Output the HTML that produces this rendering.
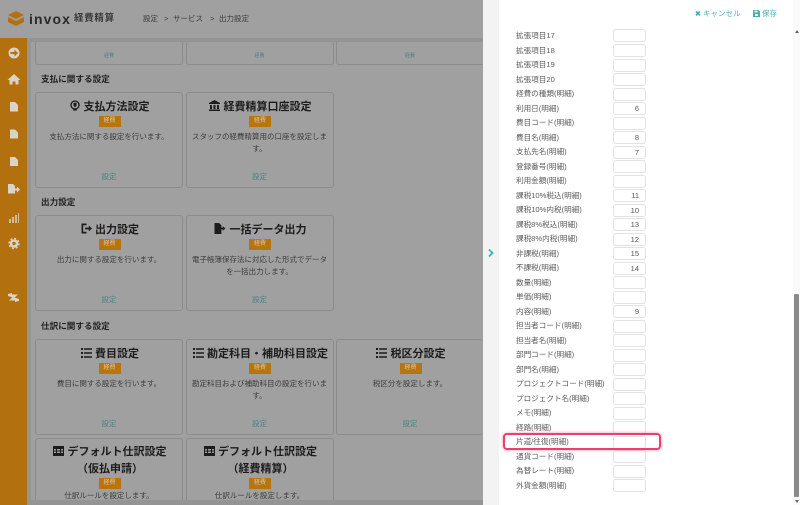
<!DOCTYPE html>
<html lang="ja"><head><meta charset="utf-8"><style>
*{box-sizing:border-box}
html,body{margin:0;padding:0}
html{background:#a0a0a0}
body{width:800px;height:505px;position:relative;overflow:hidden;background:#a0a0a0;font-family:"Liberation Sans","Noto Sans CJK JP",sans-serif;color:#222;filter:blur(.3px)}
.a{position:absolute}
.side{left:0;top:38px;width:27px;height:467px;background:#b2700e}
.bar{left:27px;top:38px;width:456px;height:4px;background:#949494}
.strip{left:27px;top:38px;width:4px;height:467px;background:#949494}
.bot{left:27px;top:500px;width:456px;height:5px;background:#949494}
.card{position:absolute;width:148px;height:96px;border:1px solid #8c8c8c;border-radius:3px;background:#a0a0a0;text-align:center}
.card .t{position:absolute;left:0;right:0;top:6px;padding-left:2px;font-size:11px;font-weight:700;line-height:17px;color:#1c1c1c;white-space:nowrap}
.card .b{position:absolute;left:62.5px;top:23px;width:22px;height:10.500px;background:#b8740f;color:#d8c8a8;font-size:6px;line-height:10.500px}
.card .d{position:absolute;left:2px;right:2px;top:38px;font-size:7.5px;line-height:11.5px;color:#3c3c3c}
.card .l{position:absolute;left:0;right:0;top:78px;font-size:7.5px;line-height:11px;color:#4b8484}
.h{position:absolute;left:41px;font-size:8.6px;font-weight:700;color:#222;line-height:12px;white-space:nowrap}
.drawer{left:483px;top:0;width:317px;height:505px;background:#fff}
.gs{left:483px;top:0;width:16px;height:505px;background:#f3f3f3}
.r{position:absolute;left:516px;font-size:7.6px;line-height:11px;color:#5c5c5c;white-space:nowrap}
.i{position:absolute;left:613px;width:33px;height:13px;border:1px solid #e2e2e2;border-radius:3px;background:#fff;font-size:7.5px;line-height:11px;text-align:right;padding-right:6px;color:#555}
svg{display:block}
</style></head><body>
<svg class="a" style="left:7px;top:11px" width="18" height="16" viewBox="0 0 18 16"><path d="M9 0 17 4 9 8 1 4Z" fill="#b2700e"/><path d="M1 6 9 10 17 6V11L9 15 1 11Z" fill="#b2700e"/></svg>
<div class="a" style="left:29px;top:9px;font-size:14px;font-weight:700;letter-spacing:1.100px;color:#2b2b2b;line-height:20px">invox</div>
<div class="a" style="left:74px;top:12px;font-size:9.5px;font-weight:700;letter-spacing:.7px;color:#3a3a3a;line-height:14px">経費精算</div>
<div class="a" style="left:143px;top:13px;font-size:7.5px;color:#3c3c3c;line-height:12px">設定</div>
<div class="a" style="left:164px;top:13px;font-size:7.5px;color:#3c3c3c;line-height:12px">&gt;</div>
<div class="a" style="left:173px;top:13px;font-size:7.5px;color:#3c3c3c;line-height:12px">サービス</div>
<div class="a" style="left:210px;top:13px;font-size:7.5px;color:#3c3c3c;line-height:12px">&gt;</div>
<div class="a" style="left:219px;top:13px;font-size:7.5px;color:#3c3c3c;line-height:12px">出力設定</div>

<div class="a side"></div><div class="a bar"></div><div class="a strip"></div><div class="a bot"></div>

<svg class="a" style="left:0;top:38px" width="27" height="300" viewBox="0 38 27 300" fill="#d9d3c8">
<circle cx="14" cy="53" r="5.5"/><path d="M10.500 52h4v-2.500l3.500 3.500-3.500 3.500V54h-4z" fill="#b2700e"/>
<path d="M14 74 20.500 80h-2v4.500H15.500V81.500h-3v3H9.500V80h-2z"/>
<path d="M10 102h5l3 3v6.500h-8z"/><path d="M10 129.500h5l3 3v6h-8z"/><path d="M10 157h5l3 3v6h-8z"/>
<path d="M8 184h5l2 2v2.500h2v-2l3 3-3 3v-2h-2v3H8z"/>
<path d="M9 223h2v-4H9zM12 223h2v-6h-2zM15 223h2v-8h-2zM18 223h1v-10h-1z" opacity=".75"/>
<circle cx="14" cy="243.500" r="4.300"/><circle cx="14" cy="243.500" r="5" fill="none" stroke="#d9d3c8" stroke-width="1.400" stroke-dasharray="2 1.930"/><circle cx="14" cy="243.500" r="1.700" fill="#b2700e"/>
<path d="M8 294l4-1v1.500h6L14 298 8 296zM19 301l-4 1v-1.500H9l4-3.500 6 2z"/>
</svg>

<!-- top partial cards -->
<div class="card" style="left:35px;top:42px;height:23px;border-top:0;border-radius:0 0 3px 3px"><div class="l" style="top:9px;font-size:5px">経費</div></div>
<div class="card" style="left:185.500px;top:42px;height:23px;border-top:0;border-radius:0 0 3px 3px"><div class="l" style="top:9px;font-size:5px">経費</div></div>
<div class="card" style="left:336px;top:42px;height:23px;width:147px;border-top:0;border-right:0;border-radius:0 0 0 3px"><div class="l" style="top:9px;font-size:5px">経費</div></div>

<div class="h" style="top:73px">支払に関する設定</div>
<div class="card" style="left:35px;top:92px"><div class="t"><svg style="display:inline-block;vertical-align:-1px" width="10" height="11" viewBox="0 0 10 11"><circle cx="5" cy="5" r="4" fill="none" stroke="#1c1c1c" stroke-width="1.300"/><path d="M3.500 2.700h3v2.800L5 7.500 3.500 5.500z" fill="#1c1c1c"/><path d="M3 10h4" stroke="#1c1c1c"/></svg> 支払方法設定</div><div class="b">経費</div><div class="d">支払方法に関する設定を行います。</div><div class="l">設定</div></div>
<div class="card" style="left:185.500px;top:92px"><div class="t"><svg style="display:inline-block;vertical-align:-1px" width="11" height="11" viewBox="0 0 11 11" fill="#1c1c1c"><path d="M5.500 0 11 3v1H0V3zM1 5h2v4H1zM4.500 5h2v4h-2zM8 5h2v4H8zM0 9.500h11V11H0z"/></svg> 経費精算口座設定</div><div class="b">経費</div><div class="d">スタッフの経費精算用の口座を設定します。</div><div class="l">設定</div></div>

<div class="h" style="top:196px">出力設定</div>
<div class="card" style="left:35px;top:215px"><div class="t"><svg style="display:inline-block;vertical-align:-1px" width="11" height="11" viewBox="0 0 12 12"><path d="M6 1.500H1.500v9H6" fill="none" stroke="#1c1c1c" stroke-width="1.800"/><path d="M4.500 5h4V2.800L12 6 8.500 9.200V7h-4z" fill="#1c1c1c"/></svg> 出力設定</div><div class="b">経費</div><div class="d">出力に関する設定を行います。</div><div class="l">設定</div></div>
<div class="card" style="left:185.500px;top:215px"><div class="t"><svg style="display:inline-block;vertical-align:-1px" width="12" height="11" viewBox="0 0 12 12" fill="#1c1c1c"><path d="M0 0h5l2.500 2.500V5H9V3.500L12 6 9 8.500V7H7.500v5H0z"/></svg> 一括データ出力</div><div class="b">経費</div><div class="d">電子帳簿保存法に対応した形式でデータを一括出力します。</div><div class="l">設定</div></div>

<div class="h" style="top:320px">仕訳に関する設定</div>
<div class="card" style="left:35px;top:339px"><div class="t"><svg style="display:inline-block;vertical-align:-1px" width="11" height="10" viewBox="0 0 11 10" fill="#1c1c1c"><path d="M0 0h2v2H0zM3 .300h8v1.500H3zM0 4h2v2H0zM3 4.300h8v1.500H3zM0 8h2v2H0zM3 8.300h8v1.500H3z"/></svg> 費目設定</div><div class="b">経費</div><div class="d">費目に関する設定を行います。</div><div class="l">設定</div></div>
<div class="card" style="left:185.500px;top:339px"><div class="t"><svg style="display:inline-block;vertical-align:-1px" width="11" height="10" viewBox="0 0 11 10" fill="#1c1c1c"><path d="M0 0h2v2H0zM3 .300h8v1.500H3zM0 4h2v2H0zM3 4.300h8v1.500H3zM0 8h2v2H0zM3 8.300h8v1.500H3z"/></svg> 勘定科目・補助科目設定</div><div class="b">経費</div><div class="d">勘定科目および補助科目の設定を行います。</div><div class="l">設定</div></div>
<div class="card" style="left:336px;top:339px;width:147px;border-right:0"><div class="t"><svg style="display:inline-block;vertical-align:-1px" width="11" height="10" viewBox="0 0 11 10" fill="#1c1c1c"><path d="M0 0h2v2H0zM3 .300h8v1.500H3zM0 4h2v2H0zM3 4.300h8v1.500H3zM0 8h2v2H0zM3 8.300h8v1.500H3z"/></svg> 税区分設定</div><div class="b">経費</div><div class="d">税区分を設定します。</div><div class="l">設定</div></div>

<div class="card" style="left:35px;top:438px;height:62px;border-bottom:0;border-radius:3px 3px 0 0"><div class="t" style="top:5px"><svg style="display:inline-block;vertical-align:-1px" width="11" height="10" viewBox="0 0 11 10" fill="#1c1c1c"><path d="M0 0h11v10H0z"/><path d="M1 3h2v1.500H1zM4 3h3v1.500H4zM8 3h2v1.500H8zM1 5.500h2V7H1zM4 5.500h3V7H4zM8 5.500h2V7H8z" fill="#a0a0a0"/></svg> デフォルト仕訳設定<br>（仮払申請）</div><div class="b" style="top:39px">経費</div><div class="d" style="top:51px">仕訳ルールを設定します。</div></div>
<div class="card" style="left:185.500px;top:438px;height:62px;border-bottom:0;border-radius:3px 3px 0 0"><div class="t" style="top:5px"><svg style="display:inline-block;vertical-align:-1px" width="11" height="10" viewBox="0 0 11 10" fill="#1c1c1c"><path d="M0 0h11v10H0z"/><path d="M1 3h2v1.500H1zM4 3h3v1.500H4zM8 3h2v1.500H8zM1 5.500h2V7H1zM4 5.500h3V7H4zM8 5.500h2V7H8z" fill="#a0a0a0"/></svg> デフォルト仕訳設定<br>（経費精算）</div><div class="b" style="top:39px">経費</div><div class="d" style="top:51px">仕訳ルールを設定します。</div></div>

<!-- drawer -->
<div class="a drawer"></div><div class="a gs"></div>
<svg class="a" style="left:488px;top:249px" width="6" height="8" viewBox="0 0 6 8"><path d="M1 .5 4.500 4 1 7.500" fill="none" stroke="#35b5b5" stroke-width="1.800"/></svg>
<div class="a" style="left:695px;top:8px;font-size:7.5px;line-height:12px;color:#48b0b0;white-space:nowrap"><b style="font-size:7px">✖</b> キャンセル</div>
<svg class="a" style="left:753px;top:10px" width="7" height="7" viewBox="0 0 7 7" fill="#48b0b0"><path d="M0 0h5.500L7 1.500V7H0z"/><path d="M1.500 .8h3v1.600h-3zM2.200 4h2.600v2H2.200z" fill="#fff"/></svg>
<div class="a" style="left:762px;top:8px;font-size:7.5px;line-height:12px;color:#48b0b0">保存</div>

<div class="r" style="top:30px">拡張項目17</div><div class="i" style="top:29px"></div>
<div class="r" style="top:44.500px">拡張項目18</div><div class="i" style="top:44px"></div>
<div class="r" style="top:59px">拡張項目19</div><div class="i" style="top:58.500px"></div>
<div class="r" style="top:73.500px">拡張項目20</div><div class="i" style="top:73px"></div>
<div class="r" style="top:88px">経費の種類(明細)</div><div class="i" style="top:87.500px"></div>
<div class="r" style="top:102.500px">利用日(明細)</div><div class="i" style="top:102px">6</div>
<div class="r" style="top:117px">費目コード(明細)</div><div class="i" style="top:116.500px"></div>
<div class="r" style="top:131.500px">費目名(明細)</div><div class="i" style="top:131px">8</div>
<div class="r" style="top:146px">支払先名(明細)</div><div class="i" style="top:145.500px">7</div>
<div class="r" style="top:160.500px">登録番号(明細)</div><div class="i" style="top:160px"></div>
<div class="r" style="top:175px">利用金額(明細)</div><div class="i" style="top:174.500px"></div>
<div class="r" style="top:189.500px">課税10%税込(明細)</div><div class="i" style="top:189px">11</div>
<div class="r" style="top:204px">課税10%内税(明細)</div><div class="i" style="top:203.500px">10</div>
<div class="r" style="top:218.500px">課税8%税込(明細)</div><div class="i" style="top:218px">13</div>
<div class="r" style="top:233px">課税8%内税(明細)</div><div class="i" style="top:232.500px">12</div>
<div class="r" style="top:247.500px">非課税(明細)</div><div class="i" style="top:247px">15</div>
<div class="r" style="top:262px">不課税(明細)</div><div class="i" style="top:261.500px">14</div>
<div class="r" style="top:276.500px">数量(明細)</div><div class="i" style="top:276px"></div>
<div class="r" style="top:291px">単価(明細)</div><div class="i" style="top:290.500px"></div>
<div class="r" style="top:305.500px">内容(明細)</div><div class="i" style="top:305px">9</div>
<div class="r" style="top:320px">担当者コード(明細)</div><div class="i" style="top:319.500px"></div>
<div class="r" style="top:334.500px">担当者名(明細)</div><div class="i" style="top:334px"></div>
<div class="r" style="top:349px">部門コード(明細)</div><div class="i" style="top:348.500px"></div>
<div class="r" style="top:363.500px">部門名(明細)</div><div class="i" style="top:363px"></div>
<div class="r" style="top:378px">プロジェクトコード(明細)</div><div class="i" style="top:377.500px"></div>
<div class="r" style="top:392.500px">プロジェクト名(明細)</div><div class="i" style="top:392px"></div>
<div class="r" style="top:407px">メモ(明細)</div><div class="i" style="top:406.500px"></div>
<div class="r" style="top:421.500px">経路(明細)</div><div class="i" style="top:421px"></div>
<div class="r" style="top:436px">片道/往復(明細)</div><div class="i" style="top:435.500px"></div>
<div class="r" style="top:450.500px">通貨コード(明細)</div><div class="i" style="top:450px"></div>
<div class="r" style="top:465px">為替レート(明細)</div><div class="i" style="top:464.500px"></div>
<div class="r" style="top:479.500px">外貨金額(明細)</div><div class="i" style="top:479px"></div>

<div class="a" style="left:503px;top:433px;width:158px;height:17px;border:2px solid #f03d70;border-radius:4px;box-shadow:0 0 3px rgba(240,61,112,.55)"></div>

<!-- scrollbar -->
<div class="a" style="left:793px;top:0;width:7px;height:505px;background:#fafafa"></div>
<div class="a" style="left:794px;top:294px;width:5px;height:203px;background:#8a8a8a;border-radius:1px"></div>
<div class="a" style="left:795px;top:30px;width:0;height:0;border-left:2.500px solid transparent;border-right:2.500px solid transparent;border-bottom:3px solid #666"></div>
<div class="a" style="left:795px;top:500px;width:0;height:0;border-left:2.500px solid transparent;border-right:2.500px solid transparent;border-top:3px solid #666"></div>
</body></html>
